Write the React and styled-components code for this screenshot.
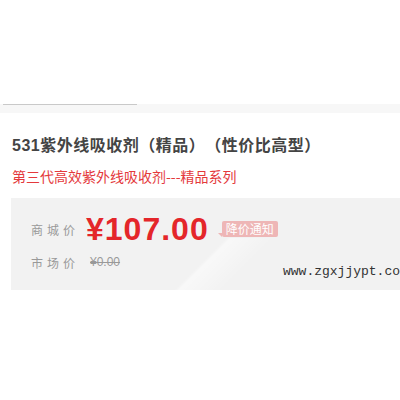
import React from 'react';
import styled, { createGlobalStyle } from 'styled-components';

const GlobalStyle = createGlobalStyle`
    body {
        margin: 0;
        background: #fff;
        font-family: "Liberation Sans", "Noto Sans CJK SC", sans-serif;
        text-spacing-trim: space-all;
    }
`;

const App = () => {
    return (
        <Page>
            <GlobalStyle />
            <TabBar>
                <ActiveTab />
            </TabBar>
            <Title>531紫外线吸收剂（精品）（性价比高型）</Title>
            <SubTitle>第三代高效紫外线吸收剂---精品系列</SubTitle>
            <PriceBox>
                <PriceRow>
                    <Label>商城价</Label>
                    <Price>¥107.00</Price>
                    <NotifyTag>降价通知</NotifyTag>
                </PriceRow>
                <PriceRow $small>
                    <Label>市场价</Label>
                    <OldPrice>¥0.00</OldPrice>
                </PriceRow>
                <Watermark>www.zgxjjypt.com</Watermark>
            </PriceBox>
        </Page>
    );
};

export default App;

const Page = styled.div`
    width: 400px;
    height: 400px;
    overflow: hidden;
    padding-top: 104px;
    box-sizing: border-box;
`;

const TabBar = styled.div`
    height: 9px;
    background: #f7f7f7;
    display: flex;
`;

const ActiveTab = styled.div`
    margin-left: 3px;
    width: 134px;
    border-top: 1px solid #c9c9c9;
`;

const Title = styled.h1`
    margin: 21px 0 0 12px;
    font-size: 16px;
    line-height: 24px;
    font-weight: bold;
    letter-spacing: 0.5px;
    color: #444;
    text-spacing-trim: space-all;
    font-family: "Liberation Sans", "Noto Sans CJK SC", sans-serif;
`;

const SubTitle = styled.div`
    margin: 7px 0 0 12px;
    font-size: 14px;
    line-height: 22px;
    color: #e4393c;
    font-family: "Noto Sans CJK SC", sans-serif;
`;

const PriceBox = styled.div`
    position: relative;
    margin: 11px 0 0 11px;
    height: 92px;
    box-sizing: border-box;
    padding: 14px 0 0 20px;
    background:
        linear-gradient(135deg, transparent 48%, rgba(255,255,255,0.5) 50%, transparent 70%) 110px 40px / 160px 60px no-repeat,
        #f2f2f2;
    overflow: hidden;
`;

const PriceRow = styled.div`
    display: flex;
    align-items: center;
    height: ${p => (p.$small ? '26px' : '34px')};
    margin-top: ${p => (p.$small ? '3px' : '0')};
`;

const Label = styled.span`
    width: 55px;
    font-size: 12px;
    letter-spacing: 4px;
    color: #999;
    font-family: "Noto Sans CJK SC", sans-serif;
`;

const Price = styled.span`
    font-size: 32px;
    font-weight: bold;
    color: #e4262a;
    font-family: "Liberation Sans", sans-serif;
    letter-spacing: 1px;
`;

const NotifyTag = styled.span`
    position: relative;
    margin-left: 13px;
    padding: 0 4px;
    height: 16px;
    line-height: 16px;
    font-size: 12px;
    color: #fff;
    background: #eeb6b6;
    border-radius: 2px;
    font-family: "Noto Sans CJK SC", sans-serif;

    &::before {
        content: "";
        position: absolute;
        left: -4px;
        bottom: 0;
        border-style: solid;
        border-width: 0 4px 4px 0;
        border-color: transparent #eeb6b6 transparent transparent;
    }
`;

const OldPrice = styled.span`
    margin-left: 4px;
    font-size: 12px;
    color: #999;
    text-decoration: line-through;
    font-family: "Liberation Sans", sans-serif;
`;

const Watermark = styled.span`
    position: absolute;
    left: 272px;
    top: 66px;
    font-size: 13px;
    color: #333;
    white-space: nowrap;
    font-family: "Liberation Mono", monospace;
`;
